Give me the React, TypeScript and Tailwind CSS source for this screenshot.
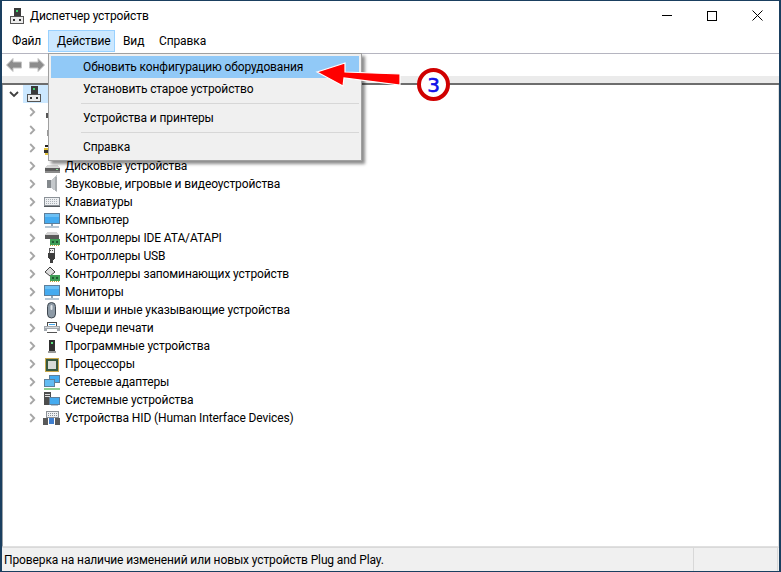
import React from 'react';

// every tree icon is drawn on an 18x18 box that fills the row
const Ico = ({ children }: { children: React.ReactNode }) => (
  <svg width="18" height="18" viewBox="0 0 18 18" shapeRendering="crispEdges">
    {children}
  </svg>
);

const Computer = () => (
  <svg width="14" height="16" viewBox="0 0 14 16" shapeRendering="crispEdges">
    <rect x="4" y="0" width="7" height="8" fill="#3a3a3a" />
    <rect x="6" y="2" width="2" height="2" fill="#3fd46f" />
    <rect x="0" y="8" width="14" height="8" fill="#555" />
    <rect x="1" y="9" width="12" height="6" fill="#ececec" />
    <rect x="3" y="11" width="2" height="2" fill="#333" />
    <rect x="9" y="11" width="2" height="2" fill="#333" />
  </svg>
);

const Disk = () => (
  <Ico>
    <path d="M4 8h11l2 3H2z" fill="#d8d8d8" />
    <rect x="2" y="11" width="15" height="5" fill="#5c5c5c" />
    <rect x="2" y="14" width="15" height="2" fill="#8c8c8c" />
    <rect x="13" y="12" width="2" height="1" fill="#8fe39a" />
  </Ico>
);

const Speaker = () => (
  <Ico>
    <rect x="4" y="5" width="4" height="8" fill="#84898d" />
    <path d="M8 5l6-5v17l-6-4z" fill="#c4c8cb" />
    <rect x="12" y="2" width="2" height="14" fill="#a7abae" />
  </Ico>
);

const Keyboard = () => (
  <Ico>
    <rect x="1" y="4" width="16" height="9" fill="#8b9197" />
    <rect x="2" y="5" width="14" height="7" fill="#eef0f2" />
    <path d="M3 6h12M3 8h12M3 10h12" stroke="#aab0b6" strokeDasharray="1 1" />
    <rect x="1" y="13" width="16" height="1" fill="#55595d" />
  </Ico>
);

const Screen = () => (
  <Ico>
    <rect x="1" y="2" width="16" height="11" fill="#5e7f9b" />
    <rect x="2" y="3" width="14" height="9" fill="#45abf0" />
    <rect x="2" y="3" width="14" height="3" fill="#6cc0f5" />
    <rect x="8" y="13" width="2" height="2" fill="#8da4b6" />
    <rect x="2" y="15" width="14" height="2" fill="#b7c7d4" />
  </Ico>
);

const Card = () => (
  <g>
    <rect x="7" y="10" width="10" height="6" fill="#3f9e56" />
    <path d="M7 16.5h10" stroke="#c4a43a" strokeDasharray="1 1" />
    <rect x="9" y="12" width="2" height="2" fill="#1d5a30" />
    <rect x="13" y="12" width="2" height="2" fill="#1d5a30" />
  </g>
);

const IdeCard = () => (
  <Ico>
    <path d="M4 3h10l2 3H2z" fill="#d4d4d4" />
    <rect x="2" y="6" width="14" height="4" fill="#5a5a5a" />
    <Card />
  </Ico>
);

const Usb = () => (
  <Ico>
    <rect x="6" y="1" width="5" height="5" fill="#f4f4f4" stroke="#5a5a5a" strokeWidth="1" />
    <path d="M5 6h7v5l-2 2v3H7v-3l-2-2z" fill="#3d3d3d" />
    <rect x="7" y="3" width="1" height="1" fill="#555" />
    <rect x="9" y="3" width="1" height="1" fill="#555" />
  </Ico>
);

const Storage = () => (
  <Ico>
    <path d="M2 7l5-5 5 5-5 4z" fill="#dcdcdc" stroke="#444" shapeRendering="auto" />
    <Card />
  </Ico>
);

const Mouse = () => (
  <svg width="18" height="18" viewBox="0 0 18 18">
    <rect x="4.5" y="1.5" width="8" height="15.5" rx="4" fill="#8d9aa6" stroke="#3f4850" />
    <rect x="7.5" y="4" width="2" height="5" rx="1" fill="#e3e7eb" />
  </svg>
);

const Printer = () => (
  <Ico>
    <rect x="4" y="3" width="10" height="4" fill="#4a4a4a" />
    <rect x="5" y="4" width="8" height="3" fill="#fff" />
    <rect x="1" y="7" width="16" height="5" fill="#a2a8ae" />
    <rect x="2" y="8" width="14" height="1" fill="#d6dade" />
    <rect x="4" y="10" width="10" height="4" fill="#fff" />
    <rect x="4" y="13" width="10" height="1" fill="#555" />
    <rect x="6" y="5" width="6" height="1" fill="#45abf0" />
  </Ico>
);

const Firmware = () => (
  <Ico>
    <rect x="6" y="3" width="6" height="11" fill="#2f2f2f" />
    <rect x="8" y="5" width="2" height="2" fill="#5fe07f" />
    <rect x="5" y="14" width="8" height="2" fill="#9a9a9a" />
  </Ico>
);

const Chip = () => (
  <Ico>
    <rect x="2" y="3" width="14" height="14" fill="#c8a84e" />
    <rect x="3" y="4" width="12" height="12" fill="#37583f" />
    <rect x="5" y="6" width="8" height="8" fill="#d8dcd8" />
  </Ico>
);

const Network = () => (
  <Ico>
    <rect x="6" y="2" width="11" height="8" fill="#5e7f9b" />
    <rect x="7" y="3" width="9" height="6" fill="#45abf0" />
    <rect x="1" y="6" width="11" height="8" fill="#5e7f9b" />
    <rect x="2" y="7" width="9" height="6" fill="#63bcf3" />
    <rect x="1" y="15" width="16" height="2" fill="#8fd08f" />
  </Ico>
);

const SystemIcon = () => (
  <Ico>
    <rect x="1" y="1" width="7" height="13" fill="#4d4d4d" />
    <rect x="2" y="3" width="5" height="1" fill="#ddd" />
    <rect x="2" y="5" width="5" height="1" fill="#ddd" />
    <rect x="6" y="6" width="11" height="8" fill="#5e7f9b" />
    <rect x="7" y="7" width="9" height="6" fill="#45abf0" />
    <rect x="8" y="14" width="7" height="1" fill="#b7c7d4" />
  </Ico>
);

const Hid = () => (
  <Ico>
    <rect x="3" y="2" width="13" height="7" fill="#8b9197" />
    <rect x="4" y="3" width="11" height="5" fill="#eef0f2" />
    <path d="M5 4h9M5 6h9" stroke="#8a9096" strokeDasharray="1 1" />
    <rect x="0" y="9" width="5" height="7" fill="#5a5a5a" />
    <rect x="6" y="9" width="5" height="6" fill="#3f7fd0" />
    <rect x="12" y="9" width="5" height="7" fill="#5a5a5a" />
  </Ico>
);

// the first rows sit behind the open menu, only a sliver of their icons shows
const Hidden1 = () => (
  <Ico>
    <rect x="3" y="10" width="4" height="5" fill="#555" />
  </Ico>
);

const Hidden2 = () => (
  <Ico>
    <rect x="4" y="9" width="4" height="6" fill="#9a9a9a" />
  </Ico>
);

const Hidden3 = () => (
  <Ico>
    <rect x="2" y="6" width="3" height="2" fill="#222" />
    <rect x="1" y="9" width="6" height="2" fill="#e2c23a" />
    <rect x="1" y="11" width="6" height="3" fill="#333" />
    <rect x="2" y="14" width="5" height="2" fill="#e2c23a" />
  </Ico>
);

const rows: [string, React.ReactNode][] = [
  ['', <Hidden1 />],
  ['', <Hidden2 />],
  ['', <Hidden3 />],
  ['Дисковые устройства', <Disk />],
  ['Звуковые, игровые и видеоустройства', <Speaker />],
  ['Клавиатуры', <Keyboard />],
  ['Компьютер', <Screen />],
  ['Контроллеры IDE ATA/ATAPI', <IdeCard />],
  ['Контроллеры USB', <Usb />],
  ['Контроллеры запоминающих устройств', <Storage />],
  ['Мониторы', <Screen />],
  ['Мыши и иные указывающие устройства', <Mouse />],
  ['Очереди печати', <Printer />],
  ['Программные устройства', <Firmware />],
  ['Процессоры', <Chip />],
  ['Сетевые адаптеры', <Network />],
  ['Системные устройства', <SystemIcon />],
  ['Устройства HID (Human Interface Devices)', <Hid />],
];

const TreeRow = ({ label, icon }: { label: string; icon: React.ReactNode }) => (
  <div className="flex h-[18px] items-center pl-[26px]">
    <svg width="7" height="10" viewBox="0 0 7 10">
      <path d="M1.2 1l4 4-4 4" fill="none" stroke="#a6a6a6" strokeWidth="1.8" />
    </svg>
    <div className="ml-[7px] h-[18px] w-[18px]">{icon}</div>
    <span className="ml-[4px] whitespace-nowrap">{label}</span>
  </div>
);

const NavArrow = ({ flip }: { flip?: boolean }) => (
  <svg width="16" height="14" viewBox="0 0 16 14" className={flip ? '-scale-x-100' : ''}>
    <path d="M0.5 7L7 0.5V4H15.5V10H7V13.5z" fill="#8c8c8c" stroke="#c4c4c4" />
  </svg>
);

const Arrow = () => (
  <svg width="90" height="30" viewBox="0 0 90 30" className="absolute left-[312px] top-[58px]">
    <path d="M3 13 L31 4 L31 13 L86 15 L86 26 L30 19 L29 27 Z" fill="#ff0000" stroke="#fff" strokeWidth="1.2" />
  </svg>
);

const Badge = () => (
  <div className="absolute left-[415px] top-[67px] flex h-[33px] w-[33px] items-center justify-center rounded-full border-[4px] border-[#d00000] bg-white text-[20px] text-[#1010e8] [-webkit-text-stroke:0.6px_#1010e8] [font-family:'DejaVu_Sans',sans-serif]">
    3
  </div>
);

const Menu = () => (
  <div className="absolute left-[46px] top-[52px] w-[314px] border border-[#a0a0a0] bg-[#f0f0f0] p-[2px] shadow-[3px_3px_3px_rgba(0,0,0,0.45)]">
    <div className="flex h-[22px] items-center bg-[#91c9f7] pl-[32px]">Обновить конфигурацию оборудования</div>
    <div className="flex h-[22px] items-center pl-[32px]">Установить старое устройство</div>
    <div className="my-[3px] ml-[30px] h-px bg-[#d7d7d7]" />
    <div className="flex h-[22px] items-center pl-[32px]">Устройства и принтеры</div>
    <div className="my-[3px] ml-[30px] h-px bg-[#d7d7d7]" />
    <div className="flex h-[22px] items-center pl-[32px]">Справка</div>
  </div>
);

export default function App() {
  return (
    <div className="relative flex h-[572px] w-[781px] flex-col overflow-hidden border-x-2 border-y border-[#1a3f60] bg-white text-[12px] tracking-[-0.12px] text-black [font-family:Roboto,'Noto_Sans',sans-serif]">
      <div className="flex h-[29px] flex-none items-center">
        <div className="ml-[8px] flex"><Computer /></div>
        <span className="ml-[6px] pt-[1px]">Диспетчер устройств</span>
        <div className="ml-auto flex h-full">
          <div className="flex w-[45px] items-center justify-center"><div className="h-px w-[10px] bg-black" /></div>
          <div className="flex w-[46px] items-center justify-center"><div className="h-[10px] w-[10px] border border-black" /></div>
          <div className="flex w-[44px] items-center justify-center">
            <svg width="11" height="11" viewBox="0 0 11 11"><path d="M0.5 0.5l10 10M10.5 0.5l-10 10" stroke="#000" /></svg>
          </div>
        </div>
      </div>

      <div className="flex h-[24px] flex-none items-center border-b border-[#b5b5c0] pb-[1px]">
        <span className="w-[46px] pl-[10px]">Файл</span>
        <span className="flex h-[22px] w-[67px] items-center border border-[#99d1ff] bg-[#cce8ff] pl-[8px]">Действие</span>
        <span className="w-[44px] pl-[8px]">Вид</span>
        <span>Справка</span>
      </div>

      <div className="flex h-[22px] flex-none items-center gap-[7px] pl-[4px]">
        <NavArrow />
        <NavArrow flip />
      </div>

      <div className="h-[9px] flex-none border-b-2 border-[#6d6d6d] bg-[#ebebeb]" />

      <div className="min-h-0 flex-1 border-r border-b border-l border-r-[#e0e0e0] border-b-[#e0e0e0] border-l-[#9aa0a6]">
        <div className="flex h-[18px] items-center pl-[6px]">
          <svg width="10" height="7" viewBox="0 0 10 7">
            <path d="M1 1l4 4 4-4" fill="none" stroke="#404040" strokeWidth="1.8" />
          </svg>
          <div className="ml-[4px] flex h-[18px] w-[100px] items-center bg-[#cce8ff] pl-[4px]">
            <Computer />
            <div className="ml-[7px] h-[9px] w-[2px] bg-[#3a1a3a]" />
          </div>
        </div>
        {rows.map(([label, icon], i) => (
          <TreeRow key={i} label={label} icon={icon} />
        ))}
      </div>

      <div className="flex h-[24px] flex-none items-center border-t border-[#d9d9d9] bg-[#f0f0f0]">
        <div className="flex h-full flex-1 items-center border-r border-[#d8d8d8] pl-[2px] pt-[1px]">
          Проверка на наличие изменений или новых устройств Plug and Play.
        </div>
        <div className="h-full w-[84px] border-r border-[#d8d8d8]" />
        <div className="w-px" />
      </div>

      <Menu />
      <Arrow />
      <Badge />
    </div>
  );
}
